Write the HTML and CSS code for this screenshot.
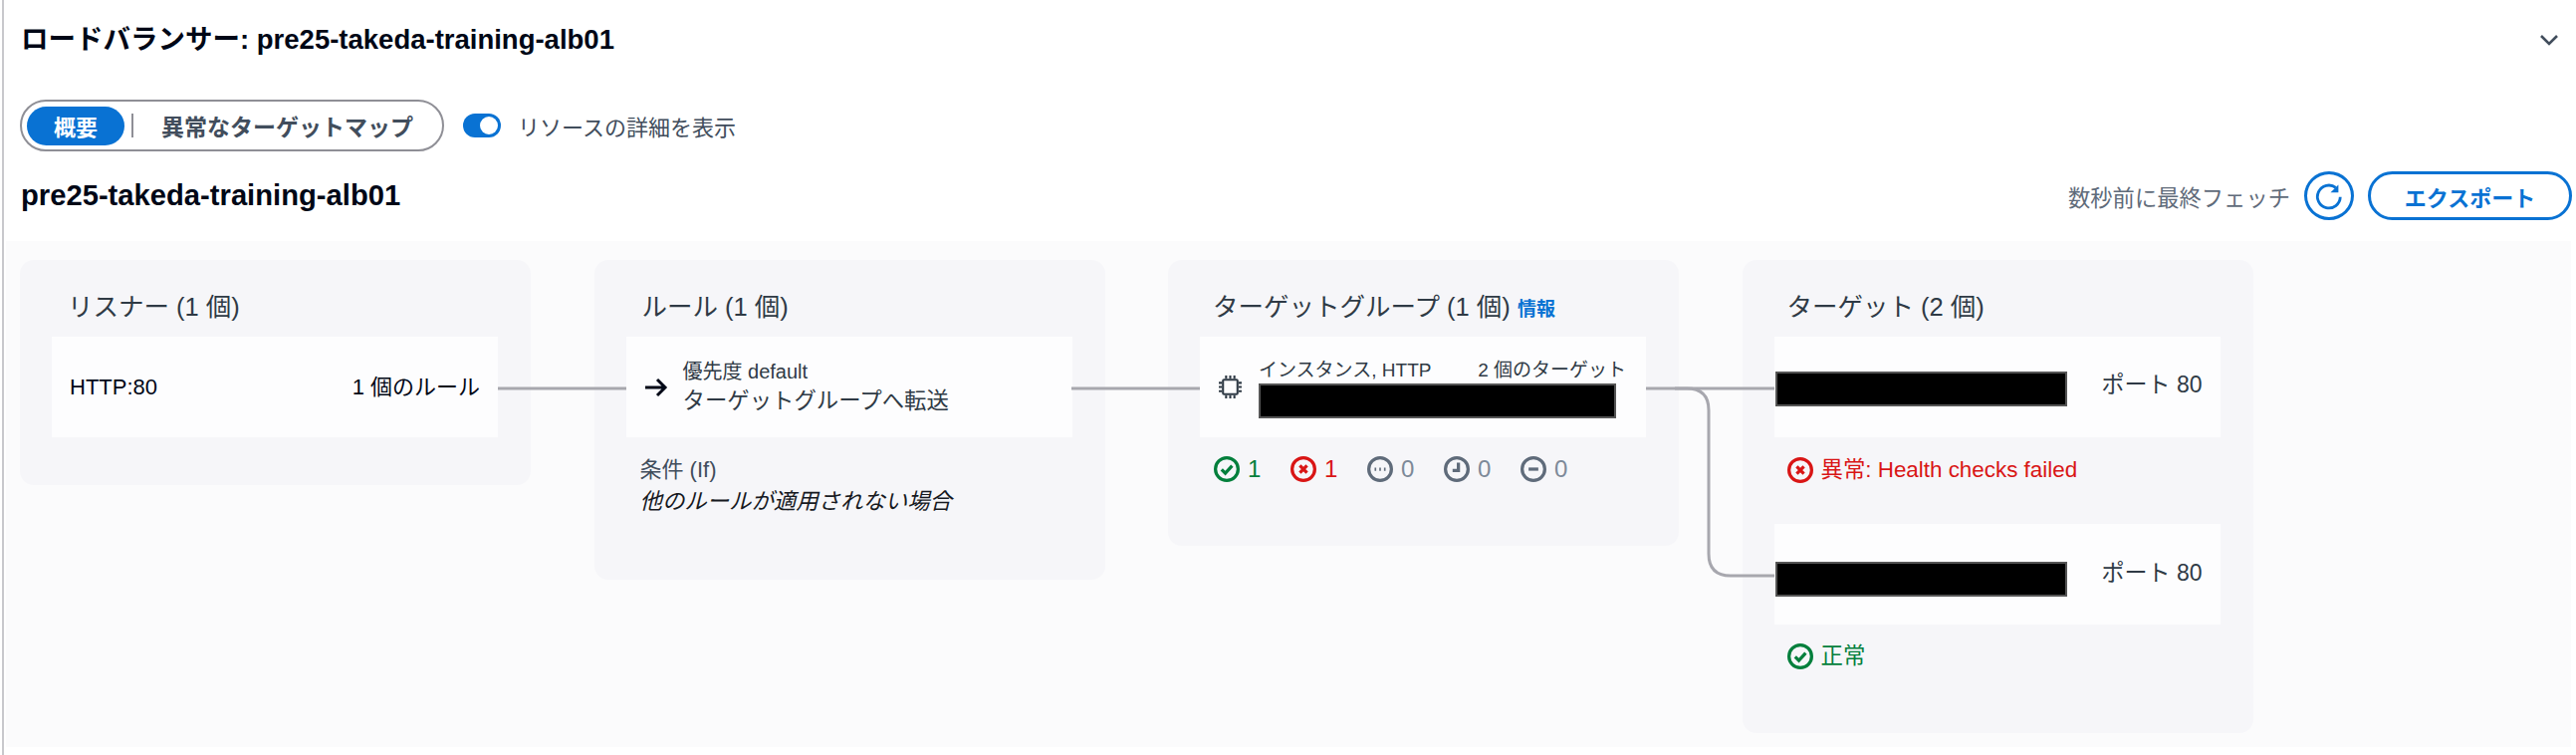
FILE: index.html
```html
<!DOCTYPE html>
<html lang="ja">
<head>
<meta charset="utf-8">
<title>ロードバランサー</title>
<link rel="stylesheet" href="styles.css">
</head>
<body>
<main class="panel">
  <header class="title-row">
    <h1 class="title">ロードバランサー: pre25-takeda-training-alb01</h1>
    <svg class="chevron" viewBox="0 0 20 12"><path d="M2 2l8 8 8-8"/></svg>
  </header>
  <div class="control-row">
    <div class="segmented">
      <span class="seg-active">概要</span>
      <span class="seg-divider"></span>
      <span class="seg-item">異常なターゲットマップ</span>
    </div>
    <span class="toggle"><span class="toggle-knob"></span></span>
    <span class="toggle-label">リソースの詳細を表示</span>
  </div>
  <div class="sub-row">
    <h2 class="subtitle">pre25-takeda-training-alb01</h2>
    <div class="actions">
      <span class="fetch">数秒前に最終フェッチ</span>
      <button class="icon-btn" type="button" aria-label="更新">
        <svg viewBox="0 0 16 16"><path d="M14 8.4A6.1 6.1 0 1 1 11.6 3.4"/><path class="head" d="M13 1.8v4.2H8.8z"/></svg>
      </button>
      <button class="export-btn" type="button">エクスポート</button>
    </div>
  </div>
  <section class="canvas">
    <article class="card card-listener">
      <h3 class="card-head">リスナー (1 個)</h3>
      <div class="box box-listener">
        <span>HTTP:80</span>
        <span>1 個のルール</span>
      </div>
    </article>
    <article class="card card-rule">
      <h3 class="card-head">ルール (1 個)</h3>
      <div class="box box-rule">
        <svg class="arrow" viewBox="0 0 24 20"><path d="M1 10h20M13 2l8 8-8 8"/></svg>
        <div class="stack">
          <div class="small">優先度 default</div>
          <div class="main-line">ターゲットグループへ転送</div>
        </div>
      </div>
      <div class="cond-label">条件 (If)</div>
      <div class="cond-text">他のルールが適用されない場合</div>
    </article>
    <article class="card card-group">
      <h3 class="card-head head-tight">ターゲットグループ (1 個) <a class="info">情報</a></h3>
      <div class="box box-group">
        <svg class="chip" viewBox="0 0 24 24"><rect x="5" y="5" width="14" height="14" rx="1"/><path d="M8 1v3M12 1v3M16 1v3M8 20v3M12 20v3M16 20v3M1 8h3M1 12h3M1 16h3M20 8h3M20 12h3M20 16h3"/></svg>
        <div class="group-text">
          <div class="small group-meta"><span>インスタンス, HTTP</span><span>2 個のターゲット</span></div>
          <div class="redact redact-group"></div>
        </div>
      </div>
      <div class="counts">
        <span class="count ok"><svg class="status" viewBox="0 0 16 16"><circle cx="8" cy="8" r="7"/><path d="M4.8 8.2l2.3 2.3 4.2-4.6"/></svg>1</span>
        <span class="count bad"><svg class="status" viewBox="0 0 16 16"><circle cx="8" cy="8" r="7"/><path d="M5.8 5.8l4.4 4.4M10.2 5.8l-4.4 4.4"/></svg>1</span>
        <span class="count idle"><svg class="status" viewBox="0 0 16 16"><circle cx="8" cy="8" r="7"/><path d="M4.6 8h1M7.5 8h1M10.4 8h1"/></svg>0</span>
        <span class="count idle"><svg class="status" viewBox="0 0 16 16"><circle cx="8" cy="8" r="7"/><path d="M9 4v4.8H5.4"/></svg>0</span>
        <span class="count idle"><svg class="status" viewBox="0 0 16 16"><circle cx="8" cy="8" r="7"/><path d="M5 8h6"/></svg>0</span>
      </div>
    </article>
    <article class="card card-target">
      <h3 class="card-head head-tight">ターゲット (2 個)</h3>
      <div class="box box-target">
        <div class="redact redact-target"></div>
        <span class="port">ポート 80</span>
      </div>
      <div class="health bad"><svg class="status" viewBox="0 0 16 16"><circle cx="8" cy="8" r="7"/><path d="M5.8 5.8l4.4 4.4M10.2 5.8l-4.4 4.4"/></svg>異常: Health checks failed</div>
      <div class="box box-target box-second">
        <div class="redact redact-target"></div>
        <span class="port">ポート 80</span>
      </div>
      <div class="health ok health-second"><svg class="status" viewBox="0 0 16 16"><circle cx="8" cy="8" r="7"/><path d="M4.8 8.2l2.3 2.3 4.2-4.6"/></svg>正常</div>
    </article>
    <svg class="links" viewBox="0 0 2576 508" width="2576" height="508">
      <path d="M494 148H623M1070 148H1199M1647 148H1776"/>
      <path d="M1676 148H1688Q1710 148 1710 170V314Q1710 336 1732 336H1776"/>
    </svg>
  </section>
</main>
</body>
</html>
```

FILE: styles.css
```css
* { box-sizing: border-box; }
html, body { margin: 0; background: #fff; }
body {
  font-family: "Liberation Sans", "Noto Sans CJK JP", sans-serif;
  font-size: 22px;
  color: #000716;
}
.panel {
  height: 758px;
  margin-left: 2px;
  padding-top: 22px;
  border-left: 2px solid #c8c8cc;
}
h1, h2, h3 { margin: 0; }
.title-row {
  display: flex;
  justify-content: space-between;
  align-items: center;
  height: 36px;
  padding: 0 17px 0 17px;
}
.title { font-size: 27.5px; line-height: 36px; font-weight: 700; }
.chevron { width: 20px; height: 12px; fill: none; stroke: #414d5c; stroke-width: 2.6; }
.control-row {
  display: flex;
  align-items: center;
  padding: 42px 0 0 16px;
}
.segmented {
  display: flex;
  align-items: center;
  width: 426px;
  height: 52px;
  padding-left: 5px;
  border: 2px solid #8f8f96;
  border-radius: 26px;
  font-weight: 700;
  color: #414d5c;
}
.seg-active {
  display: flex;
  align-items: center;
  justify-content: center;
  width: 98px;
  height: 39px;
  border-radius: 20px;
  background: #0972d3;
  color: #fff;
}
.seg-divider { width: 2px; height: 24px; margin: 0 28px 0 7px; background: #8f8f96; }
.seg-item { font-size: 23px; }
.toggle {
  display: flex;
  align-items: center;
  justify-content: flex-end;
  width: 38px;
  height: 24px;
  margin-left: 19px;
  padding-right: 3px;
  border-radius: 12px;
  background: #0972d3;
}
.toggle-knob { width: 18px; height: 18px; border-radius: 50%; background: #fff; }
.toggle-label { margin-left: 17px; color: #414d5c; }
.sub-row {
  display: flex;
  justify-content: space-between;
  align-items: center;
  height: 49px;
  margin-top: 20px;
  padding: 0 4px 0 17px;
}
.subtitle { font-size: 29.2px; font-weight: 700; }
.actions { display: flex; align-items: center; }
.fetch { font-size: 22.3px; color: #5f6b7a; }
.icon-btn {
  display: flex;
  align-items: center;
  justify-content: center;
  width: 50px;
  height: 49px;
  margin: 0 14px;
  padding: 0;
  background: #fff;
  border: 3px solid #0972d3;
  border-radius: 50%;
}
.icon-btn svg { width: 30px; height: 30px; fill: none; stroke: #0972d3; stroke-width: 1.5; }
.icon-btn .head { fill: #0972d3; stroke: none; }
.export-btn {
  width: 205px;
  height: 49px;
  background: #fff;
  border: 3px solid #0972d3;
  border-radius: 25px;
  color: #0972d3;
  font: 700 22px "Liberation Sans", "Noto Sans CJK JP", sans-serif;
}
.canvas {
  position: relative;
  display: flex;
  align-items: flex-start;
  gap: 63.5px;
  width: 2576px;
  height: 508px;
  margin: 21px 0 0 2px;
  padding: 19px 0 0 14px;
  background: #fbfbfc;
}
.links {
  position: absolute;
  left: 0;
  top: 0;
  fill: none;
  stroke: #a7a7ae;
  stroke-width: 3;
  pointer-events: none;
}
.card {
  flex: 0 0 513px;
  padding: 28px 33px 0 32px;
  border-radius: 14px;
  background: #f6f6f9;
}
.card-listener { height: 226px; }
.card-rule { height: 321px; }
.card-group { height: 287px; }
.card-target { height: 475px; }
.card-head {
  height: 49px;
  padding-left: 16px;
  font-size: 25.5px;
  line-height: 38px;
  font-weight: 400;
  color: #2f3a45;
}
.head-tight { padding-left: 13px; }
.info { font-size: 19px; font-weight: 700; color: #0972d3; }
.box {
  display: flex;
  align-items: center;
  height: 101px;
  background: #fdfdfe;
}
.box-listener { justify-content: space-between; padding: 0 18px; line-height: 30px; }
.box-rule { padding-left: 18px; }
.arrow { width: 24px; height: 20px; fill: none; stroke: #000716; stroke-width: 3; }
.stack { margin-left: 15px; }
.small { font-size: 19px; line-height: 27px; color: #2f3a45; }
.stack .small { font-size: 20px; }
.main-line { font-size: 22.4px; line-height: 31px; color: #2f3a45; }
.cond-label { margin: 18px 0 0 14px; line-height: 30px; color: #414d5c; }
.cond-text { margin-left: 14px; font-size: 22.4px; line-height: 33px; font-style: italic; color: #16191f; }
.box-group { padding-left: 18px; }
.chip { flex: none; width: 25px; height: 25px; fill: none; stroke: #2f3a45; stroke-width: 2; }
.group-text { width: 369px; margin-left: 16px; }
.group-meta { display: flex; justify-content: space-between; height: 27px; }
.redact { background: #000; border: 2px solid #555; }
.redact-group { width: 359px; height: 35px; }
.counts { display: flex; margin: 19px 0 0 14px; font-size: 24px; }
.count { display: flex; align-items: center; gap: 8px; width: 77px; color: #7d8998; line-height: 26px; }
.count.ok { color: #037f3c; }
.count.bad { color: #d91515; }
.count.idle .status { stroke: #5f6b7a; }
.status { flex: none; width: 26px; height: 26px; fill: none; stroke: currentColor; stroke-width: 2; }
.box-target { justify-content: space-between; padding: 0 18px 0 1px; }
.box-second { margin-top: 41px; }
.redact-target { width: 293px; height: 35px; margin-top: 4px; }
.box-second .redact-target { margin-top: 9px; }
.port { font-size: 23px; color: #2f3a45; margin-top: -6px; line-height: 30px; }
.box-second .port { margin-top: -4px; }
.health {
  display: flex;
  align-items: center;
  gap: 8px;
  margin: 20px 0 0 13px;
  font-size: 22.4px;
  line-height: 26px;
}
.health-second { margin-top: 19px; }
.health.bad { color: #d91515; }
.health.ok { color: #037f3c; }
```
